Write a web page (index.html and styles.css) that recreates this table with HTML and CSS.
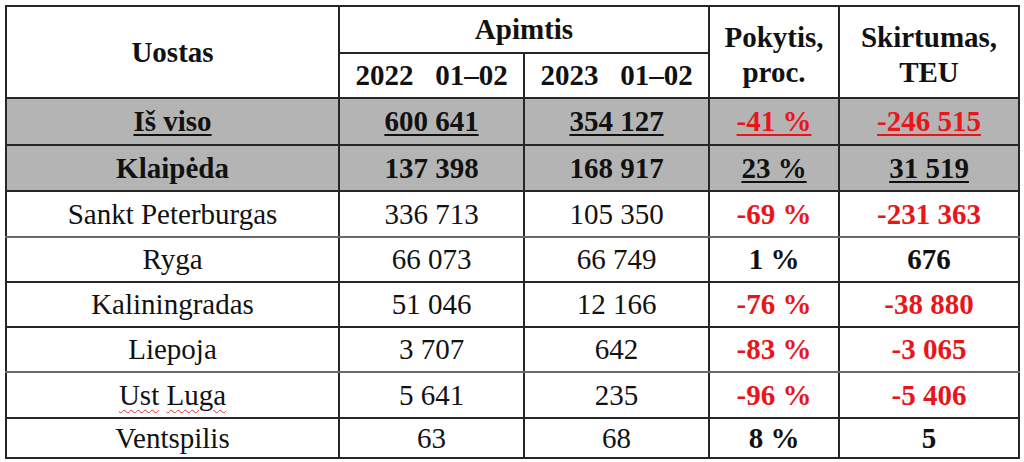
FILE: index.html
```html
<!DOCTYPE html>
<html lang="lt">
<head>
<meta charset="utf-8">
<title>Uostai</title>
<link rel="stylesheet" href="styles.css">
</head>
<body>
<table class="ports">
  <colgroup>
    <col class="c1"><col class="c2"><col class="c3"><col class="c4"><col class="c5">
  </colgroup>
  <thead>
    <tr class="h1">
      <th rowspan="2" class="uostas">Uostas</th>
      <th colspan="2">Apimtis</th>
      <th rowspan="2" class="two">Pokytis,<br>proc.</th>
      <th rowspan="2" class="two">Skirtumas,<br>TEU</th>
    </tr>
    <tr class="h2">
      <th class="yr">2022&nbsp;&nbsp; 01–02</th>
      <th class="yr">2023&nbsp;&nbsp; 01–02</th>
    </tr>
  </thead>
  <tbody>
    <tr class="gray r1">
      <td><u>Iš viso</u></td><td><u>600 641</u></td><td><u>354 127</u></td><td class="red"><u>-41 %</u></td><td class="red"><u>-246 515</u></td>
    </tr>
    <tr class="gray r2">
      <td>Klaipėda</td><td>137 398</td><td>168 917</td><td><u>23 %</u></td><td><u>31 519</u></td>
    </tr>
    <tr class="r3">
      <td>Sankt Peterburgas</td><td>336 713</td><td>105 350</td><td class="b red">-69 %</td><td class="b red">-231 363</td>
    </tr>
    <tr class="r4">
      <td>Ryga</td><td>66 073</td><td>66 749</td><td class="b">1 %</td><td class="b">676</td>
    </tr>
    <tr class="r5">
      <td>Kaliningradas</td><td>51 046</td><td>12 166</td><td class="b red">-76 %</td><td class="b red">-38 880</td>
    </tr>
    <tr class="r6">
      <td>Liepoja</td><td>3 707</td><td>642</td><td class="b red">-83 %</td><td class="b red">-3 065</td>
    </tr>
    <tr class="r7">
      <td><span class="sq">Ust</span> <span class="sq">Luga</span></td><td>5 641</td><td>235</td><td class="b red">-96 %</td><td class="b red">-5 406</td>
    </tr>
    <tr class="r8">
      <td>Ventspilis</td><td>63</td><td>68</td><td class="b">8 %</td><td class="b">5</td>
    </tr>
  </tbody>
</table>
</body>
</html>
```

FILE: styles.css
```css
html, body {
  margin: 0;
  padding: 0;
  background: #ffffff;
}

body {
  padding: 5px 0 0 5px;
  font-family: "Liberation Serif", "Times New Roman", serif;
  color: #111111;
}

.ports {
  border-collapse: collapse;
  table-layout: fixed;
  width: 1013px;
  border: 2px solid #1a1a1a;
  font-size: 29px;
}

.c1 { width: 333px; }
.c2 { width: 185px; }
.c3 { width: 185px; }
.c4 { width: 130px; }
.c5 { width: 180px; }

.ports th,
.ports td {
  border: 2px solid #262626;
  padding: 0;
  text-align: center;
  vertical-align: middle;
  line-height: 35px;
  white-space: nowrap;
}

.ports th {
  font-weight: bold;
}

.ports td {
  font-weight: normal;
}

.h1 th { height: 45px; }
.h2 th { height: 43px; }

.two {
  padding-top: 6px !important;
}

.gray td {
  background: #b4b4b4;
  font-weight: bold;
}

.r1 td { height: 45px; }
.r2 td { height: 44px; }
.r3 td { height: 44px; }
.r4 td { height: 43px; }
.r5 td { height: 43px; }
.r6 td { height: 43px; }
.r7 td { height: 44px; }
.r8 td { height: 38px; }

.r3 td, .r6 td { border-bottom-color: #6a6a6a; }

.ports td.b {
  font-weight: bold;
}

.red {
  color: #e8161a;
}

u {
  text-decoration-thickness: 2px;
  text-underline-offset: 3px;
}

.sq {
  text-decoration: underline wavy #d8333a;
  text-decoration-thickness: 1px;
  text-underline-offset: 4px;
}
```
